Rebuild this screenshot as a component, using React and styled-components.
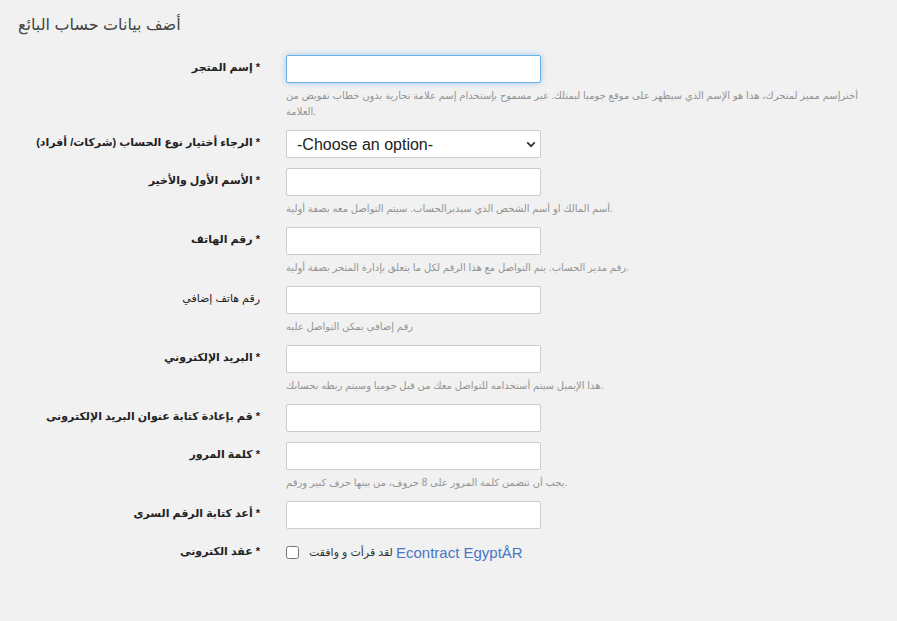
import React from 'react'
import styled, { createGlobalStyle } from 'styled-components'

const GlobalStyle = createGlobalStyle`
  html, body {
    margin: 0;
    padding: 0;
    background: #f1f1f1;
  }
  body {
    font-family: 'Liberation Sans', 'DejaVu Sans', Arial, sans-serif;
    color: #333;
  }
`

const fields = [
  {
    label: 'إسم المتجر',
    required: true,
    focused: true,
    help: 'أخترإسم مميز لمتجرك، هذا هو الإسم الذي سيظهر على موقع جوميا لبمتلك. غير مسموح بإستخدام إسم علامة تجارية بدون خطاب تفويض من العلامة.',
  },
  { label: 'الرجاء أختيار نوع الحساب (شركات/ أفراد)', required: true, select: true },
  {
    label: 'الأسم الأول والأخير',
    required: true,
    help: 'أسم المالك او أسم الشخص الذي سيديرالحساب. سيتم التواصل معه بصفة أولية.',
  },
  {
    label: 'رقم الهاتف',
    required: true,
    help: 'رقم مدير الحساب. يتم التواصل مع هذا الرقم لكل ما يتعلق بإدارة المتجر بصفة أولية.',
  },
  { label: 'رقم هاتف إضافي', required: false, help: 'رقم إضافي يمكن التواصل عليه' },
  {
    label: 'البريد الإلكتروني',
    required: true,
    help: 'هذا الإيميل سيتم أستخدامه للتواصل معك من قبل جوميا وسيتم ربطه بحسابك.',
  },
  { label: 'قم بإعادة كتابة عنوان البريد الإلكترونى', required: true },
  {
    label: 'كلمة المرور',
    required: true,
    help: 'يجب أن تتضمن كلمة المرور على 8 حروف، من بينها حرف كبير ورقم.',
  },
  { label: 'أعد كتابة الرقم السرى', required: true },
]

function App() {
  return (
    <Page>
      <GlobalStyle />
      <Title>أضف بيانات حساب البائع</Title>
      <Form>
        {fields.map((f) => (
          <Row key={f.label}>
            <Label required={f.required}>
              {f.required ? '* ' : ''}
              {f.label}
            </Label>
            <Field>
              {f.select ? (
                <SelectWrap>
                  <Select defaultValue="">
                    <option value="">-Choose an option-</option>
                  </Select>
                  <Chevron viewBox="0 0 12 8">
                    <path d="M1.5 1.5 L6 6 L10.5 1.5" />
                  </Chevron>
                </SelectWrap>
              ) : (
                <Input type="text" focused={f.focused} />
              )}
              {f.help && <Help>{f.help}</Help>}
            </Field>
          </Row>
        ))}
        <Row>
          <Label required>* عقد الكترونى</Label>
          <Field>
            <Agree>
              <Check type="checkbox" />
              <AgreeText>لقد قرأت و وافقت </AgreeText>
              <Link href="#">Econtract EgyptÅR</Link>
            </Agree>
          </Field>
        </Row>
      </Form>
    </Page>
  )
}

const Page = styled.div`
  min-height: 621px;
  padding: 14px 0 0 0;
  box-sizing: border-box;
`

const Title = styled.h3`
  margin: 0 0 19px 18px;
  font-size: 16px;
  font-weight: normal;
  line-height: 22px;
  color: #444;
`

const Form = styled.div`
  display: flex;
  flex-direction: column;
`

const Row = styled.div`
  display: grid;
  grid-template-columns: 260px 583px;
  column-gap: 26px;
  margin-bottom: 10px;
`

const Label = styled.label`
  direction: rtl;
  text-align: right;
  font-size: 11px;
  font-weight: ${(p) => (p.required ? 'bold' : 'normal')};
  color: #222;
  padding-top: 4px;
  line-height: 16px;
`

const Field = styled.div`
  display: flex;
  flex-direction: column;
  align-items: flex-start;
`

const Input = styled.input`
  width: 255px;
  height: 28px;
  box-sizing: border-box;
  background: #fff;
  border: 1px solid ${(p) => (p.focused ? '#66afe9' : '#cccccc')};
  border-radius: 2px;
  padding: 4px 8px;
  font-size: 14px;
  outline: none;
  box-shadow: ${(p) =>
    p.focused ? '0 0 6px rgba(102, 175, 233, 0.6)' : 'none'};
`

const SelectWrap = styled.div`
  position: relative;
  width: 255px;
  height: 28px;
`

const Select = styled.select`
  appearance: none;
  width: 100%;
  height: 100%;
  box-sizing: border-box;
  background: #fff;
  border: 1px solid #cccccc;
  border-radius: 2px;
  padding: 0 10px;
  font-family: 'Liberation Sans', Arial, sans-serif;
  font-size: 16px;
  color: #222;
  outline: none;
`

const Chevron = styled.svg`
  position: absolute;
  right: 5px;
  top: 11px;
  width: 10px;
  height: 7px;
  fill: none;
  stroke: #333;
  stroke-width: 2.2;
  pointer-events: none;
`

const Help = styled.p`
  margin: 5px 0 0 0;
  font-size: 10px;
  line-height: 16px;
  color: #939393;
  text-align: left;
  width: 572px;
`

const Agree = styled.div`
  display: flex;
  align-items: center;
  height: 26px;
`

const Check = styled.input`
  width: 13px;
  height: 13px;
  margin: 0 10px 0 0;
  accent-color: #333;
`

const AgreeText = styled.span`
  font-size: 11px;
  color: #333;
  white-space: pre;
`

const Link = styled.a`
  font-size: 15px;
  color: #4a77c4;
  text-decoration: none;
`

export default App
